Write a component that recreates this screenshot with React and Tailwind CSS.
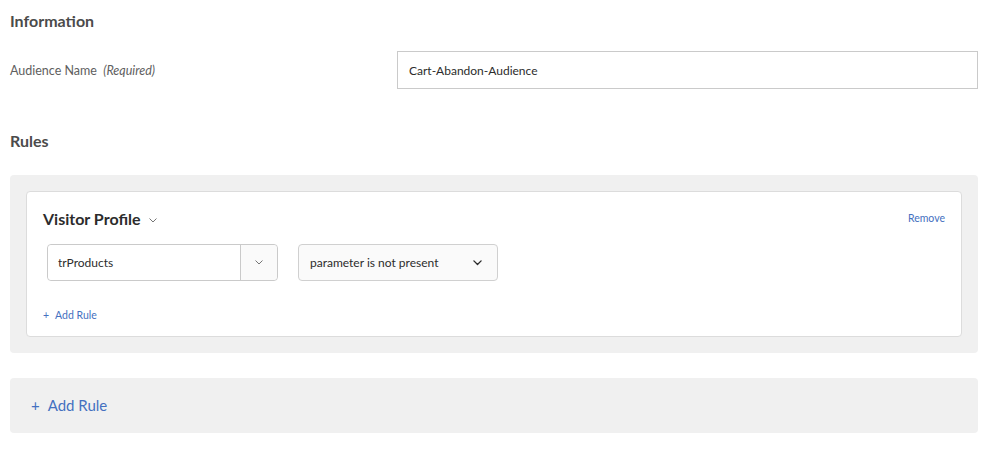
const Chevron = ({ className = '', size = 10, stroke = 1.4 }) => (
  <svg width={size} height={size * 0.6} viewBox="0 0 10 6" className={className} fill="none">
    <path d="M1 1 L5 5 L9 1" stroke="currentColor" strokeWidth={stroke} strokeLinecap="round" strokeLinejoin="round" />
  </svg>
);

export default function App() {
  return (
    <div className="min-h-[449px] bg-white pl-[10px] pr-[14px] pt-[10px] text-[#4b4b4b]" style={{ fontFamily: 'Lato, "Open Sans", sans-serif' }}>
      <h2 className="h-[22px] text-[16px] font-bold leading-[22px] text-[#4b4b4b]">Information</h2>

      <div className="mt-[19px] flex items-center">
        <div className="mt-[2px] text-[12.5px] text-[#606060]">
          Audience Name <span className="ml-[3px] italic">(Required)</span>
        </div>
        <div className="ml-auto flex h-[38px] w-[581px] items-center border border-[#cacaca] px-[11px] pt-[1px] text-[12px] text-[#2c2c2c]">
          Cart-Abandon-Audience
        </div>
      </div>

      <h2 className="mt-[41px] h-[22px] text-[16px] font-bold leading-[22px] text-[#4b4b4b]">Rules</h2>

      <div className="mt-[23px] rounded-[4px] bg-[#f0f0f0] p-4">
        <div className="rounded-[4px] border border-[#dcdcdc] bg-white px-4 pb-[12px] pt-4">
          <div className="flex h-[22px] items-center">
            <span className="text-[16px] font-bold text-[#2c2c2c]">Visitor Profile</span>
            <Chevron className="ml-[8px] mt-[2px] text-[#6e6e6e]" size={8} stroke={1.2} />
            <span className="ml-auto text-[10.5px] text-[#4470c0]">Remove</span>
          </div>

          <div className="mt-[14px] flex gap-[20px] pl-1">
            <div className="flex h-[37px] w-[231px] rounded-[4px] border border-[#cacaca]">
              <div className="flex flex-1 items-center rounded-l-[4px] bg-white pl-[10px] pt-[1px] text-[12px] text-[#2c2c2c]">trProducts</div>
              <div className="flex w-[37px] items-center justify-center rounded-r-[4px] border-l border-[#cacaca] bg-[#fafafa] text-[#6e6e6e]">
                <Chevron size={8} stroke={1.2} />
              </div>
            </div>
            <div className="flex h-[37px] w-[200px] items-center rounded-[4px] border border-[#d0d0d0] bg-[#fafafa] pl-[11px] pr-[15px] pt-[1px] text-[12px] text-[#2c2c2c]">
              <span>parameter is not present</span>
              <Chevron className="ml-auto text-[#2c2c2c]" size={9} stroke={1.5} />
            </div>
          </div>

          <div className="mt-[27px] flex h-4 items-center text-[10.5px] text-[#4470c0]">
            <span className="mr-[6px]">+</span>
            <span>Add Rule</span>
          </div>
        </div>
      </div>

      <div className="mt-[25px] flex h-[55px] items-center rounded-[4px] bg-[#f0f0f0] pl-[21px] text-[15px] text-[#4470c0]">
        <span className="mr-[8px]">+</span>
        <span>Add Rule</span>
      </div>
    </div>
  );
}
